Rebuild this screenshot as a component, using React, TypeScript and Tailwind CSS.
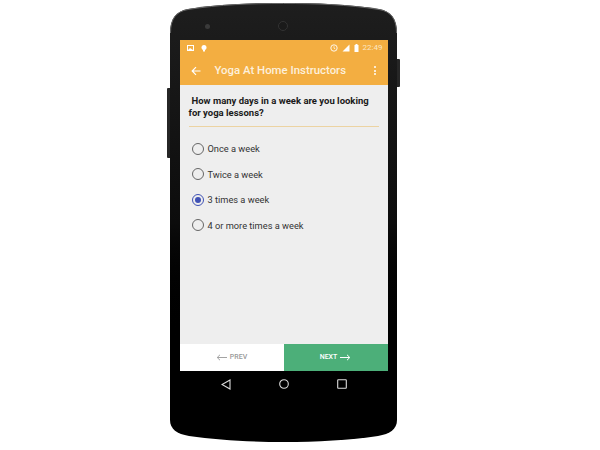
import React from "react";

const Radio = ({ label, on }: { label: string; on?: boolean }) => (
  <div className="flex items-center h-[25.5px] pl-[12px]">
    <div className={`w-[12px] h-[12px] rounded-full border-[1.5px] flex items-center justify-center ${on ? "border-[#3f51b5]" : "border-[#666]"}`}>
      {on && <div className="w-[6px] h-[6px] rounded-full bg-[#3f51b5]" />}
    </div>
    <span className="ml-[4px] text-[9.25px] text-[#333] leading-none">{label}</span>
  </div>
);

export default function App() {
  return (
    <div className="relative w-[600px] h-[450px] bg-white overflow-hidden font-['Roboto',sans-serif]">
      <div className="relative ml-[170px] mt-[3px] w-[227px] h-[439px]">
        <div className="absolute left-[-3px] top-[85px] w-[3px] h-[70px] bg-[#262626] rounded-l-[1px]" />
        <div className="absolute right-[-3px] top-[56px] w-[3px] h-[28px] bg-[#262626] rounded-r-[1px]" />
        <div className="w-full h-full bg-gradient-to-b from-[#1e1e1e] via-[#0c0c0c] via-50% to-[#000000] to-78% [clip-path:path('M0,30_C0,16_6,8_18,6_C50,1_80,0_113.5,0_C147,0_177,1_209,6_C221,8_227,16_227,30_L227,417_C227,426_220,431_208,433_C180,437_147,439_113.5,439_C80,439_47,437_19,433_C7,431_0,426_0,417_Z')] flex flex-col items-center pt-[37px]">
          <div className="absolute top-[21px] left-[35px] w-[5px] h-[5px] rounded-full bg-[#3a3a3a]" />
          <div className="absolute top-[18px] left-[108px] w-[10px] h-[10px] rounded-full bg-[#1a1a1a] border border-[#333]" />
          <div className="w-[208px] h-[331px] flex flex-col bg-[#eeeeee]">
            <div className="bg-[#f3ae41] h-[45px] flex flex-col text-white">
              <div className="h-[16px] flex items-center pl-[7px] pr-[5px]">
                <svg width="7" height="6" viewBox="0 0 7 6"><rect x="0.5" y="0.5" width="6" height="5" fill="none" stroke="#fff" strokeWidth="1" /><path d="M1 5l2-2 3 2z" fill="#fff" /></svg>
                <svg className="ml-[7px]" width="6" height="7" viewBox="0 0 6 7"><circle cx="3" cy="2.5" r="2.5" fill="#fff" /><rect x="2" y="4.5" width="2" height="2" fill="#fff" /></svg>
                <div className="ml-auto flex items-center gap-[3px]">
                  <svg width="8" height="8" viewBox="0 0 8 8"><circle cx="4" cy="4" r="3.2" fill="none" stroke="#fff" strokeWidth="0.9" /><path d="M4 2.2v2l1.3.7" fill="none" stroke="#fff" strokeWidth="0.7" /></svg>
                  <svg width="9" height="8" viewBox="0 0 9 8"><path d="M8.5 0.5v7h-7z" fill="#fff" /></svg>
                  <svg className="ml-[1px]" width="5" height="8" viewBox="0 0 5 8"><rect x="0.5" y="1" width="4" height="7" fill="#fff" /><rect x="1.5" y="0" width="2" height="1" fill="#fff" /></svg>
                  <span className="ml-[1px] text-[8px] leading-none text-[#fbe6c4]">22:49</span>
                </div>
              </div>
              <div className="flex-1 flex items-center pl-[11px] pr-[12px]">
                <svg width="10" height="10" viewBox="0 0 10 10"><path d="M9.5 5H1.5M5 1.2L1.2 5 5 8.8" fill="none" stroke="#fff" strokeWidth="1.2" /></svg>
                <span className="ml-[14px] text-[11.4px] font-medium leading-none text-[#fdf0dc]">Yoga At Home Instructors</span>
                <div className="ml-auto flex flex-col gap-[1.5px]">
                  <div className="w-[2px] h-[2px] bg-white rounded-full" />
                  <div className="w-[2px] h-[2px] bg-white rounded-full" />
                  <div className="w-[2px] h-[2px] bg-white rounded-full" />
                </div>
              </div>
            </div>
            <div className="flex-1 flex flex-col">
              <div className="pt-[10px] mx-[9px] h-[42px] border-b border-[#ecd3a2] text-[9.5px] font-bold leading-[11.5px] text-[#1a1a1a]">
                <div className="pl-[3px]">How many days in a week are you looking</div>
                <div>for yoga lessons?</div>
              </div>
              <div className="pt-[9px]">
                <Radio label="Once a week" />
                <Radio label="Twice a week" />
                <Radio label="3 times a week" on />
                <Radio label="4 or more times a week" />
              </div>
            </div>
            <div className="h-[27px] flex">
              <div className="w-[104px] bg-white flex items-center justify-center gap-[3px] text-[#999] font-medium text-[7px]">
                <svg width="11" height="7" viewBox="0 0 11 7"><path d="M11 3.5H1.5M4 .8L1.2 3.5 4 6.2" fill="none" stroke="#999" strokeWidth="0.9" /></svg>
                <span>PREV</span>
              </div>
              <div className="w-[104px] bg-[#4caf79] flex items-center justify-center gap-[3px] text-white font-medium text-[7px]">
                <span>NEXT</span>
                <svg width="11" height="7" viewBox="0 0 11 7"><path d="M0 3.5h9.5M7 .8l2.8 2.7L7 6.2" fill="none" stroke="#fff" strokeWidth="1" /></svg>
              </div>
            </div>
          </div>
          <div className="w-[208px] flex-1 relative">
            <svg className="absolute left-[41px] top-[8px]" width="10" height="11" viewBox="0 0 10 11"><path d="M9 1L1 5.5 9 10z" fill="none" stroke="#ddd" strokeWidth="1.1" /></svg>
            <svg className="absolute left-[99px] top-[8px]" width="10" height="10" viewBox="0 0 10 10"><circle cx="5" cy="5" r="4.3" fill="none" stroke="#ddd" strokeWidth="1.1" /></svg>
            <svg className="absolute left-[157px] top-[8px]" width="10" height="10" viewBox="0 0 10 10"><rect x="0.7" y="0.7" width="8.6" height="8.6" rx="0.5" fill="none" stroke="#ddd" strokeWidth="1.1" /></svg>
          </div>
        </div>
        <svg className="absolute left-0 top-0 pointer-events-none" width="227" height="439" viewBox="0 0 227 439">
          <path d="M0.5,30 C0.5,16 6,8.5 18,6.5 C50,1.5 80,0.5 113.5,0.5 C147,0.5 177,1.5 209,6.5 C221,8.5 226.5,16 226.5,30" fill="none" stroke="#666" strokeWidth="1" />
        </svg>
      </div>
    </div>
  );
}
